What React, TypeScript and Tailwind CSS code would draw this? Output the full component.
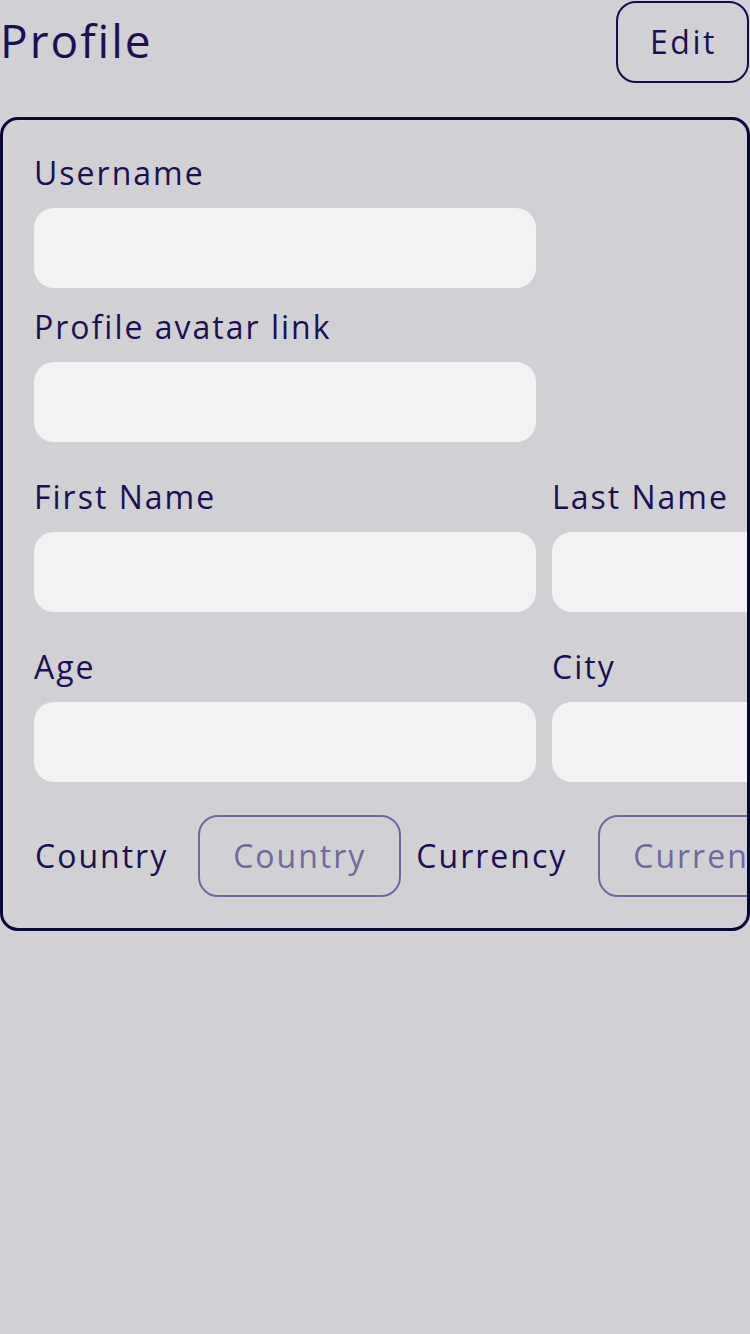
import React from "react";

const font = { fontFamily: '"Open Sans", "Lato", sans-serif' };

function Field({ label, className = "" }: { label: string; className?: string }) {
  return (
    <div className={`flex flex-col ${className}`}>
      <div className="h-[40px] flex items-center text-[32px] leading-none text-[#1a1052] tracking-[2px]">{label}</div>
      <div className="mt-[15px] h-[80px] w-[502px] shrink-0 rounded-[20px] bg-[#f2f2f2]" />
    </div>
  );
}

export default function App() {
  return (
    <div className="min-h-[1334px] w-[750px] bg-[#d1d0d5]" style={font}>
      <div className="flex items-start justify-between">
        <h1 className="mt-[13px] text-[46px] leading-[54px] text-[#1a1052] tracking-[2px]">Profile</h1>
        <button className="mt-[1px] mr-[1px] h-[82px] w-[133px] rounded-[20px] border-2 border-[#160d4f] pl-[2px] text-[32px] text-[#1a1052] tracking-[2.5px]">
          Edit
        </button>
      </div>
      <div className="mt-[34px] h-[814px] w-[750px] overflow-hidden rounded-[18px] border-[3px] border-[#08073a] pl-[31px] pt-[33px]">
        <Field label="Username" />
        <Field label="Profile avatar link" className="mt-[19px]" />
        <div className="mt-[35px] flex gap-[16px]">
          <Field label="First Name" />
          <Field label="Last Name" />
        </div>
        <div className="mt-[35px] flex gap-[16px]">
          <Field label="Age" />
          <Field label="City" />
        </div>
        <div className="mt-[33px] flex items-center">
          <span className="pl-[1px] text-[32px] text-[#1a1052] tracking-[2px]">Country</span>
          <div className="ml-[30px] flex h-[82px] shrink-0 items-center rounded-[20px] border-2 border-[#6f6a9b] px-[33px] text-[32px] text-[#6f6a9b] tracking-[2px]">
            Country
          </div>
          <span className="ml-[15px] text-[32px] text-[#1a1052] tracking-[2px]">Currency</span>
          <div className="ml-[31px] flex h-[82px] shrink-0 items-center rounded-[20px] border-2 border-[#6f6a9b] px-[33px] text-[32px] text-[#6f6a9b] tracking-[2px]">
            Currency
          </div>
        </div>
      </div>
    </div>
  );
}
